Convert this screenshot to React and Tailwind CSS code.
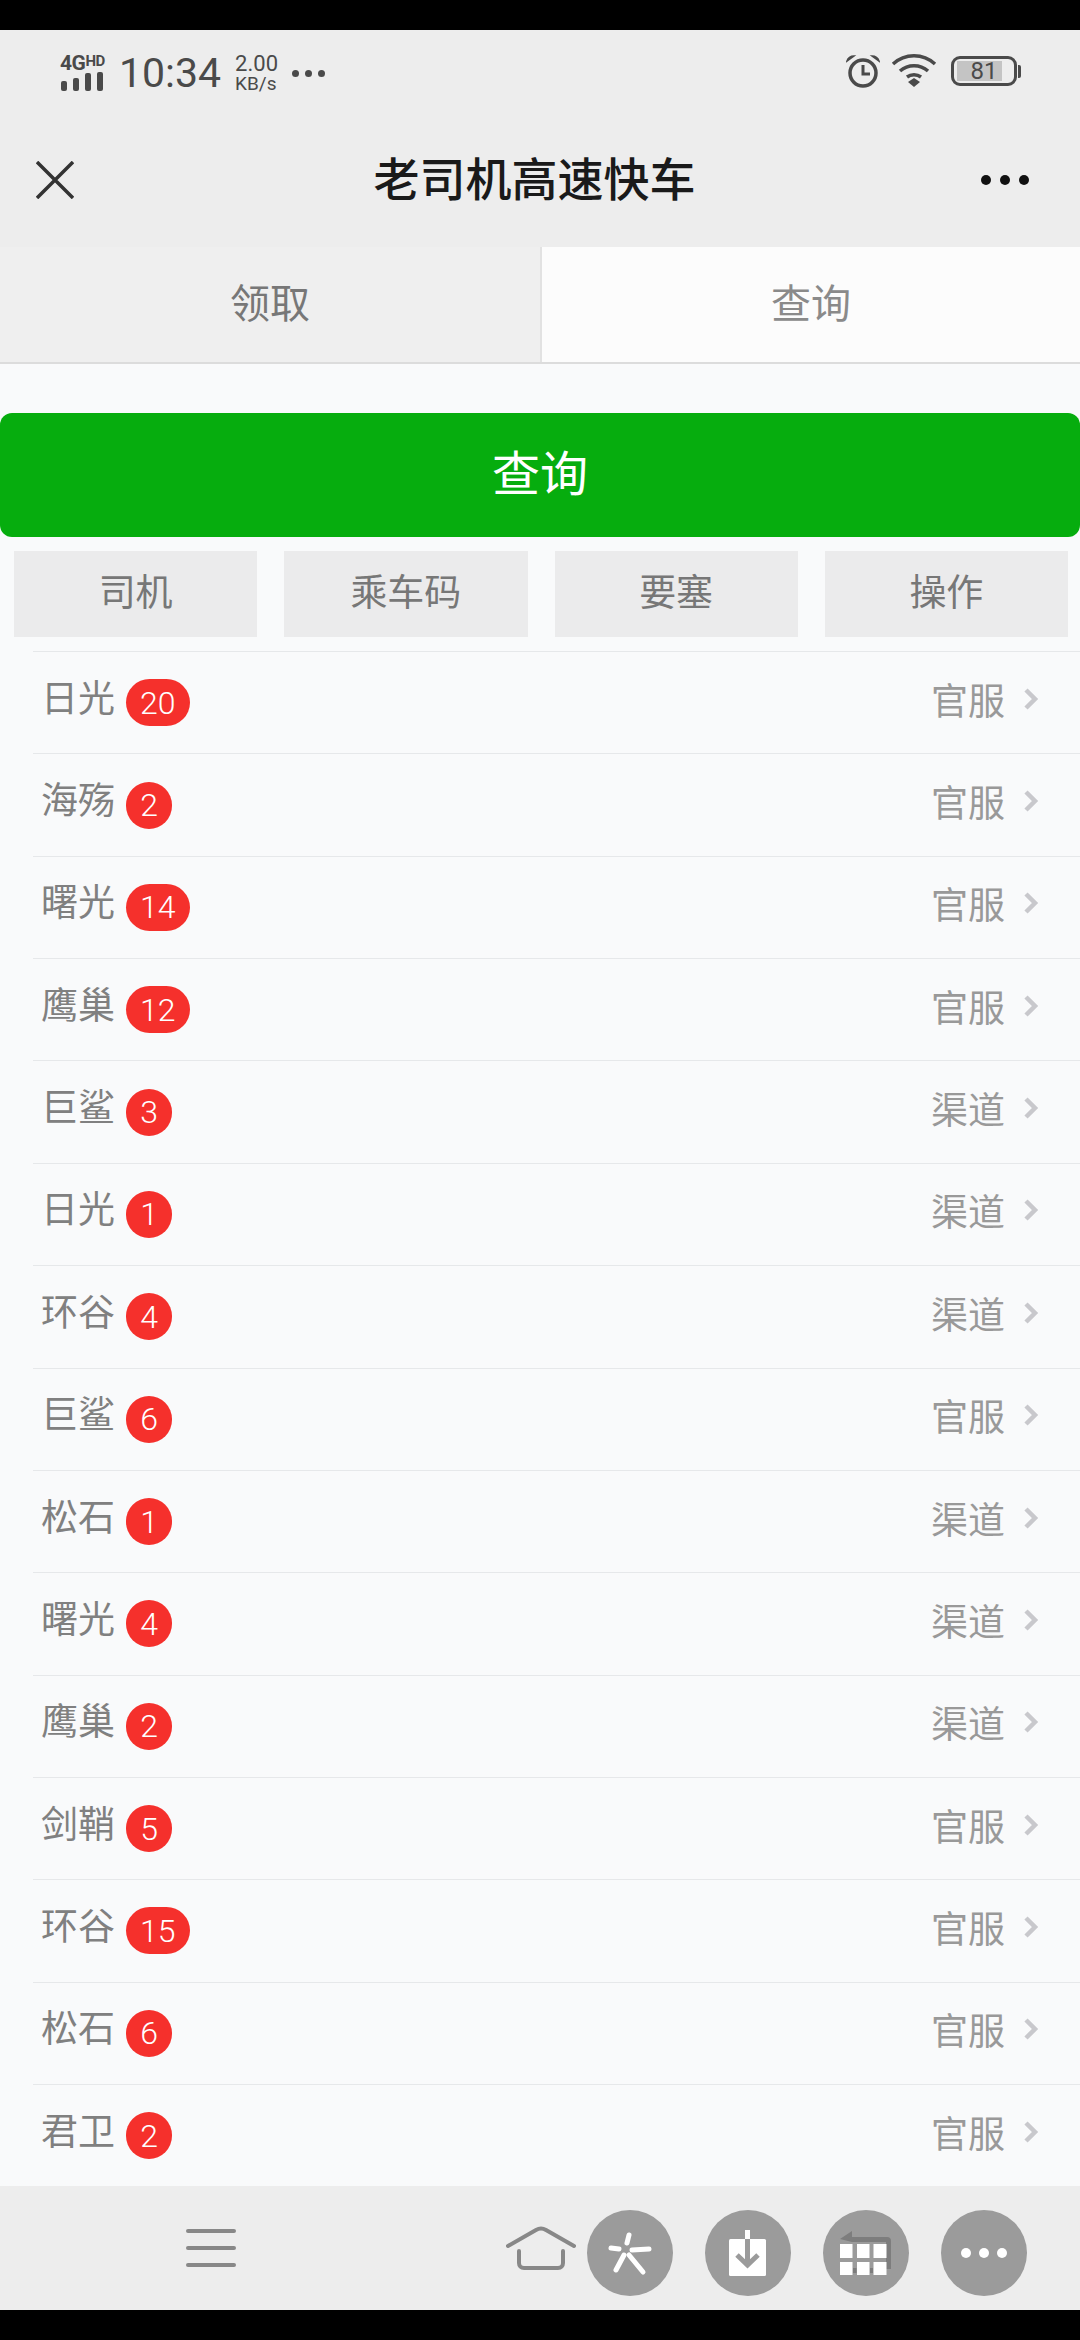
const ROWS = [
  ['日光', 20, '官服'],
  ['海殇', 2, '官服'],
  ['曙光', 14, '官服'],
  ['鹰巢', 12, '官服'],
  ['巨鲨', 3, '渠道'],
  ['日光', 1, '渠道'],
  ['环谷', 4, '渠道'],
  ['巨鲨', 6, '官服'],
  ['松石', 1, '渠道'],
  ['曙光', 4, '渠道'],
  ['鹰巢', 2, '渠道'],
  ['剑鞘', 5, '官服'],
  ['环谷', 15, '官服'],
  ['松石', 6, '官服'],
  ['君卫', 2, '官服'],
]

const COLUMNS = ['司机', '乘车码', '要塞', '操作']

function StatusBar() {
  return (
    <div className="h-[80px] flex items-start justify-between pl-[60px] pr-[59px] pt-[22px] text-[#4a4a4a]">
      <div className="flex items-center h-[36px] mt-[3px]">
        <div className="w-[45px] flex flex-col">
          <span className="h-[17px] text-[21px] leading-[17px] font-bold whitespace-nowrap tracking-[-0.5px]">
            4G<span className="text-[15px] align-top leading-[13px]">HD</span>
          </span>
          <svg width="45" height="19" viewBox="0 0 45 19" fill="#4a4a4a">
            <rect x="1" y="9" width="6" height="10" rx="2" />
            <rect x="13" y="6" width="6" height="13" rx="2" />
            <rect x="25" y="1" width="6" height="18" rx="2" />
            <rect x="37" y="0" width="6" height="19" rx="2" />
          </svg>
        </div>
        <span className="ml-[14px] text-[41px] leading-[48px] font-normal">10:34</span>
        <div className="ml-[14px] flex flex-col">
          <span className="text-[22px] leading-[21px]">2.00</span>
          <span className="text-[19px] leading-[20px]">KB/s</span>
        </div>
        <div className="ml-[14px] flex gap-[6px]">
          <span className="w-[7px] h-[7px] rounded-full bg-[#4a4a4a]" />
          <span className="w-[7px] h-[7px] rounded-full bg-[#4a4a4a]" />
          <span className="w-[7px] h-[7px] rounded-full bg-[#4a4a4a]" />
        </div>
      </div>
      <div className="flex items-center h-[36px] mt-[1px]">
        <svg width="34" height="34" viewBox="0 0 34 34" fill="none" stroke="#4a4a4a">
          <circle cx="17" cy="19" r="13" strokeWidth="3.5" />
          <path d="M17 11v9h7" strokeWidth="3" />
          <path d="M1 7c1-3 4-5 7-5zM33 7c-1-3-4-5-7-5z" fill="#4a4a4a" strokeWidth="1.5" />
        </svg>
        <svg className="ml-[11px]" width="46" height="34" viewBox="0 0 46 34" fill="none" stroke="#4a4a4a" strokeWidth="3.5">
          <path d="M2 10c12-11 30-11 42 0" />
          <path d="M9 17c8-7 20-7 28 0" />
          <path d="M16 23c4-3 10-3 14 0" />
          <path d="M17 28l6-4 6 4-6 5z" fill="#4a4a4a" stroke="none" />
        </svg>
        <div className="ml-[14px] relative w-[66px] h-[30px] rounded-[9px] border-[3px] border-[#4a4a4a] flex items-center justify-center">
          <div className="absolute left-[3px] top-[2px] bottom-[2px] w-[45px] bg-[#c4c4c4]" />
          <span className="relative text-[24px] leading-[24px]">81</span>
        </div>
        <div className="ml-[1px] w-[3px] h-[13px] rounded-r-[2px] bg-[#4a4a4a]" />
      </div>
    </div>
  )
}

function TitleBar() {
  return (
    <div className="h-[137px] flex items-center justify-between pl-[36px] pr-[51px] pt-[2px]">
      <svg width="38" height="38" viewBox="0 0 38 38" stroke="#333" strokeWidth="3.5">
        <path d="M1 1l36 36M37 1L1 37" />
      </svg>
      <span className="text-[46px] leading-[56px] font-medium text-[#1a1a1a] ml-[14px]">老司机高速快车</span>
      <div className="flex gap-[9px]">
        <span className="w-[10px] h-[10px] rounded-full bg-[#111]" />
        <span className="w-[10px] h-[10px] rounded-full bg-[#111]" />
        <span className="w-[10px] h-[10px] rounded-full bg-[#111]" />
      </div>
    </div>
  )
}

function Tabs() {
  return (
    <div className="h-[117px] shrink-0 grid grid-cols-2 border-b-2 border-[#dcdcdc]">
      <div className="flex items-center justify-center text-[40px] text-[#777] bg-[#efefef]">领取</div>
      <div className="flex items-center justify-center text-[40px] text-[#8a8a8a] bg-[#fcfcfc] border-l-2 border-[#e2e2e2]">查询</div>
    </div>
  )
}

function Row({ name, count, kind }) {
  return (
    <div className="h-[102.36px] shrink-0 ml-[33px] pl-[8px] pr-[41px] border-t border-[#e6e8ea] flex items-center justify-between">
      <div className="flex items-center">
        <span className="text-[37px] leading-[44px] text-[#808080] mb-[6px]">{name}</span>
        <span className="ml-[11px] min-w-[46px] h-[47px] px-[14px] rounded-full bg-[#f5302c] flex items-center justify-center text-[32px] font-light leading-none text-white">
          {count}
        </span>
      </div>
      <div className="flex items-center">
        <span className="text-[37px] leading-[44px] text-[#999]">{kind}</span>
        <svg className="ml-[19px] mb-[8px]" width="15" height="22" viewBox="0 0 15 22" fill="none" stroke="#c8c8cc" strokeWidth="4.5">
          <path d="M2 2l9 9-9 9" />
        </svg>
      </div>
    </div>
  )
}

function BottomBar() {
  return (
    <div className="h-[124px] shrink-0 bg-[#ededed] flex items-center">
      <div className="ml-[186px] w-[50px] flex flex-col gap-[13px]">
        <span className="h-[4px] rounded-full bg-[#888]" />
        <span className="h-[4px] rounded-full bg-[#888]" />
        <span className="h-[4px] rounded-full bg-[#888]" />
      </div>
      <svg className="ml-[270px]" width="70" height="44" viewBox="0 0 70 44" fill="none" stroke="#888" strokeWidth="4" strokeLinecap="round">
        <path d="M2 20L30 4q5-3 10 0l28 16" />
        <path d="M13 25v12c0 3 2 5 5 5h34c3 0 5-2 5-5v-12" />
      </svg>
      <div className="ml-[11px] mt-[10px] flex gap-[32px]">
        <div className="w-[86px] h-[86px] rounded-full bg-[#9b9b9b] flex items-center justify-center">
          <svg width="46" height="46" viewBox="0 0 46 46" stroke="#fff" strokeLinecap="round" fill="none" strokeWidth="5">
            <path d="M22 5l-2 8" />
            <path d="M42 19l-17 1" />
            <path d="M36 42L22 25" />
            <path d="M9 40l8-15" />
            <path d="M4 18l8 1" />
          </svg>
        </div>
        <div className="w-[86px] h-[86px] rounded-full bg-[#9b9b9b] flex items-center justify-center">
          <svg width="38" height="46" viewBox="0 0 38 46">
            <rect x="0" y="9" width="37" height="37" rx="1.5" fill="#fff" />
            <rect x="16" y="0" width="5" height="9" fill="#fff" />
            <path d="M18.5 9v25M8 25l10.500 10L29 25" stroke="#9b9b9b" strokeWidth="5" fill="none" />
          </svg>
        </div>
        <div className="w-[86px] h-[86px] rounded-full bg-[#9b9b9b] flex items-center justify-center">
          <svg width="52" height="44" viewBox="0 0 52 44">
            <path d="M0 8L12 0v6h35q4 0 4 4v28h-5V11H12z" fill="#7d7d7d" />
            <rect x="13" y="37" width="3.500" height="5" fill="#7d7d7d" />
            <rect x="30" y="37" width="3" height="5" fill="#7d7d7d" />
            <g fill="#fff">
              <rect x="0" y="13" width="12.500" height="14" />
              <rect x="17" y="13" width="12.500" height="14" />
              <rect x="33.500" y="13" width="13" height="14" />
              <rect x="0" y="31" width="12.500" height="13" />
              <rect x="17" y="31" width="12.500" height="13" />
              <rect x="33.500" y="31" width="13" height="13" />
            </g>
          </svg>
        </div>
        <div className="w-[86px] h-[86px] rounded-full bg-[#9b9b9b] flex items-center justify-center gap-[8px]">
          <span className="w-[10px] h-[10px] rounded-full bg-white" />
          <span className="w-[10px] h-[10px] rounded-full bg-white" />
          <span className="w-[10px] h-[10px] rounded-full bg-white" />
        </div>
      </div>
    </div>
  )
}

export default function App() {
  return (
    <div className="h-[2340px] w-[1080px] overflow-hidden bg-black py-[30px] font-['Roboto','Noto_Sans_CJK_SC',sans-serif]">
      <div className="h-full flex flex-col bg-[#f9fafb]">
        <div className="bg-[#ededed] shrink-0">
          <StatusBar />
          <TitleBar />
        </div>
        <Tabs />
        <div className="flex-1 min-h-0 overflow-hidden pt-[49px] flex flex-col">
          <button className="h-[124px] shrink-0 rounded-[12px] bg-[#06ad0e] text-white text-[48px] leading-none">查询</button>
          <div className="mt-[14px] pl-[14px] pr-[12px] grid grid-cols-4 gap-x-[27px] shrink-0">
            {COLUMNS.map((c) => (
              <div key={c} className="h-[86px] bg-[#ebebec] flex items-center justify-center text-[37px] text-[#777]">
                {c}
              </div>
            ))}
          </div>
          <div className="mt-[14px] flex flex-col">
            {ROWS.map(([name, count, kind], i) => (
              <Row key={i} name={name} count={count} kind={kind} />
            ))}
          </div>
        </div>
        <BottomBar />
      </div>
    </div>
  )
}
